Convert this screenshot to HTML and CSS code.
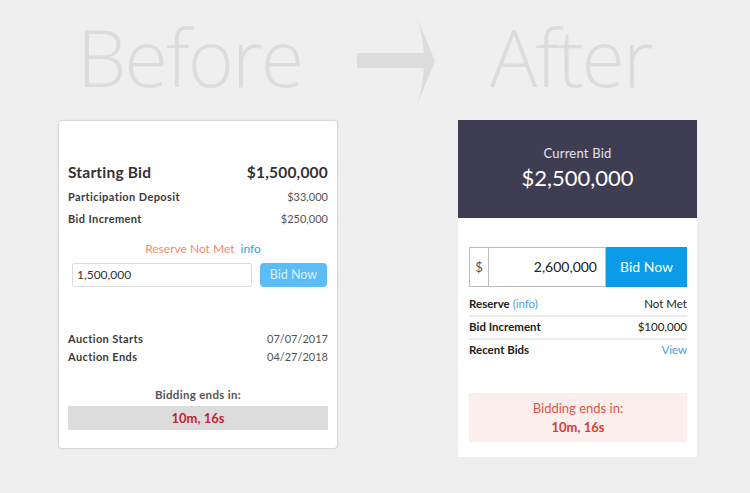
FILE: index.html
```html
<!DOCTYPE html>
<html>
<head>
<meta charset="utf-8">
<link rel="stylesheet" href="styles.css">
</head>
<body>
<div class="stage">
  <div class="titles">
    <div class="word word-before">Before</div>
    <svg class="arrow" width="80" height="90" viewBox="356 17 80 90">
      <rect x="357" y="53" width="70" height="15" fill="#dcdcdc"/>
      <path d="M417 18 L435 61 L417 105 Q424 85 424 61 Q424 38 417 18 Z" fill="#dcdcdc"/>
    </svg>
    <div class="word word-after">After</div>
  </div>
  <div class="cards">
    <div class="old-card">
      <div class="old-row old-main"><span>Starting Bid</span><span>$1,500,000</span></div>
      <div class="old-row old-small first"><span>Participation Deposit</span><span class="val">$33,000</span></div>
      <div class="old-row old-small"><span>Bid Increment</span><span class="val">$250,000</span></div>
      <div class="old-reserve"><span class="orange">Reserve Not Met</span><span class="old-info">info</span></div>
      <div class="old-bid">
        <div class="old-input">1,500,000</div>
        <div class="old-btn">Bid Now</div>
      </div>
      <div class="old-dates">
        <div class="old-line"><span>Auction Starts</span><span class="val">07/07/2017</span></div>
        <div class="old-line"><span>Auction Ends</span><span class="val">04/27/2018</span></div>
      </div>
      <div class="old-ends">Bidding ends in:</div>
      <div class="old-timer">10m, 16s</div>
    </div>
    <div class="new-card">
      <div class="new-head">
        <div class="cur-label">Current Bid</div>
        <div class="cur-value">$2,500,000</div>
      </div>
      <div class="new-body">
        <div class="bid-group">
          <div class="addon">$</div>
          <div class="amount">2,600,000</div>
          <div class="bid-btn">Bid Now</div>
        </div>
        <div class="info-list">
          <div class="info-row"><span><b>Reserve</b> <span class="link">(info)</span></span><span>Not Met</span></div>
          <div class="info-row"><b>Bid Increment</b><span>$100,000</span></div>
          <div class="info-row last"><b>Recent Bids</b><span class="link">View</span></div>
        </div>
        <div class="countdown">
          <div>Bidding ends in:</div>
          <div class="count-time">10m, 16s</div>
        </div>
      </div>
    </div>
  </div>
</div>
</body>
</html>
```

FILE: styles.css
```css
html, body {
  margin: 0;
  padding: 0;
  background: #efefef;
}
body {
  width: 750px;
  height: 493px;
  overflow: hidden;
  font-family: Lato, "Open Sans", sans-serif;
}
.titles {
  display: grid;
  grid-template-columns: 356px 134px auto;
  height: 120px;
  align-items: start;
}
.word {
  font-family: "Open Sans", sans-serif;
  font-weight: 300;
  font-size: 79px;
  line-height: 110px;
  letter-spacing: -2px;
  color: #dcdcdc;
  margin-top: 2px;
  white-space: nowrap;
}
.word-before {
  padding-left: 77px;
}
.arrow {
  display: block;
  margin-top: 17px;
}
.cards {
  display: flex;
  align-items: flex-start;
  padding-left: 58px;
  gap: 120px;
}

/* ---------- old card ---------- */
.old-card {
  width: 260px;
  background: #fff;
  border: 1px solid #d9d9d9;
  border-radius: 4px;
  box-shadow: 0 0 2px rgba(0, 0, 0, 0.08);
  padding: 41px 9px 18px 9px;
  color: #3a3a3a;
}
.old-row {
  display: flex;
  justify-content: space-between;
}
.old-main {
  font-size: 15.5px;
  line-height: 20px;
  font-weight: 700;
  color: #333;
  letter-spacing: 0.2px;
}
.old-small {
  font-size: 11px;
  line-height: 22px;
  font-weight: 700;
  letter-spacing: 0.4px;
}
.old-small.first {
  margin-top: 4px;
}
.val {
  font-weight: 400;
  color: #555;
  letter-spacing: 0;
}
.old-reserve {
  margin-top: 10px;
  font-size: 12px;
  line-height: 18px;
  text-align: center;
  padding-left: 10px;
}
.orange {
  color: #f5896b;
}
.old-info {
  color: #3ba0df;
  margin-left: 6px;
}
.old-bid {
  display: flex;
  gap: 8px;
  margin-top: 5px;
  padding: 0 1px 0 4px;
}
.old-input {
  flex: 1;
  height: 22px;
  border: 1px solid #dcdcdc;
  border-radius: 2px;
  font-size: 12px;
  line-height: 22px;
  padding-left: 4px;
  color: #333;
}
.old-btn {
  width: 67px;
  height: 24px;
  background: #5bbcf6;
  border-radius: 4px;
  color: #d6effd;
  font-size: 12.5px;
  line-height: 24px;
  text-align: center;
}
.old-dates {
  margin-top: 43px;
}
.old-line {
  display: flex;
  justify-content: space-between;
  font-size: 11px;
  line-height: 18px;
  font-weight: 700;
  letter-spacing: 0.4px;
}
.old-ends {
  margin-top: 20px;
  text-align: center;
  font-size: 11.5px;
  line-height: 18px;
  font-weight: 700;
  color: #555;
  letter-spacing: 0.3px;
}
.old-timer {
  margin-top: 2px;
  height: 24px;
  background: #dcdcdc;
  text-align: center;
  font-size: 13px;
  line-height: 24px;
  font-weight: 700;
  color: #c4262e;
}

/* ---------- new card ---------- */
.new-card {
  width: 239px;
  background: #fff;
}
.new-head {
  height: 98px;
  box-sizing: border-box;
  background: #3e3d52;
  padding-top: 25px;
  text-align: center;
  color: #fff;
}
.cur-label {
  font-size: 13px;
  line-height: 16px;
  color: #e4e4e8;
  letter-spacing: 0.2px;
}
.cur-value {
  margin-top: 4px;
  font-size: 22px;
  line-height: 26px;
}
.new-body {
  padding: 29px 10px 15px 11px;
}
.bid-group {
  display: flex;
  height: 40px;
}
.addon {
  width: 18px;
  border: 1px solid #bdbdbd;
  font-size: 13px;
  line-height: 38px;
  color: #555;
  text-align: center;
}
.amount {
  flex: 1;
  border: 1px solid #bdbdbd;
  border-left: none;
  font-size: 14px;
  line-height: 38px;
  text-align: right;
  padding-right: 8px;
  color: #222;
}
.bid-btn {
  width: 81px;
  background: #0a9be9;
  color: #fff;
  font-size: 14px;
  line-height: 40px;
  text-align: center;
}
.info-list {
  margin-top: 7px;
}
.info-row {
  display: flex;
  justify-content: space-between;
  font-size: 11.5px;
  line-height: 16px;
  padding: 2px 0 3px;
  border-bottom: 2px solid #ececec;
  color: #222;
}
.info-row b {
  font-weight: 700;
}
.info-row.last {
  border-bottom: none;
}
.link {
  color: #4a9be6;
}
.countdown {
  margin-top: 32px;
  background: #fbeeec;
  padding: 6px 0 5px;
  text-align: center;
  font-size: 13px;
  line-height: 19px;
  color: #e45449;
}
.count-time {
  font-weight: 700;
  color: #d63f35;
}
```
